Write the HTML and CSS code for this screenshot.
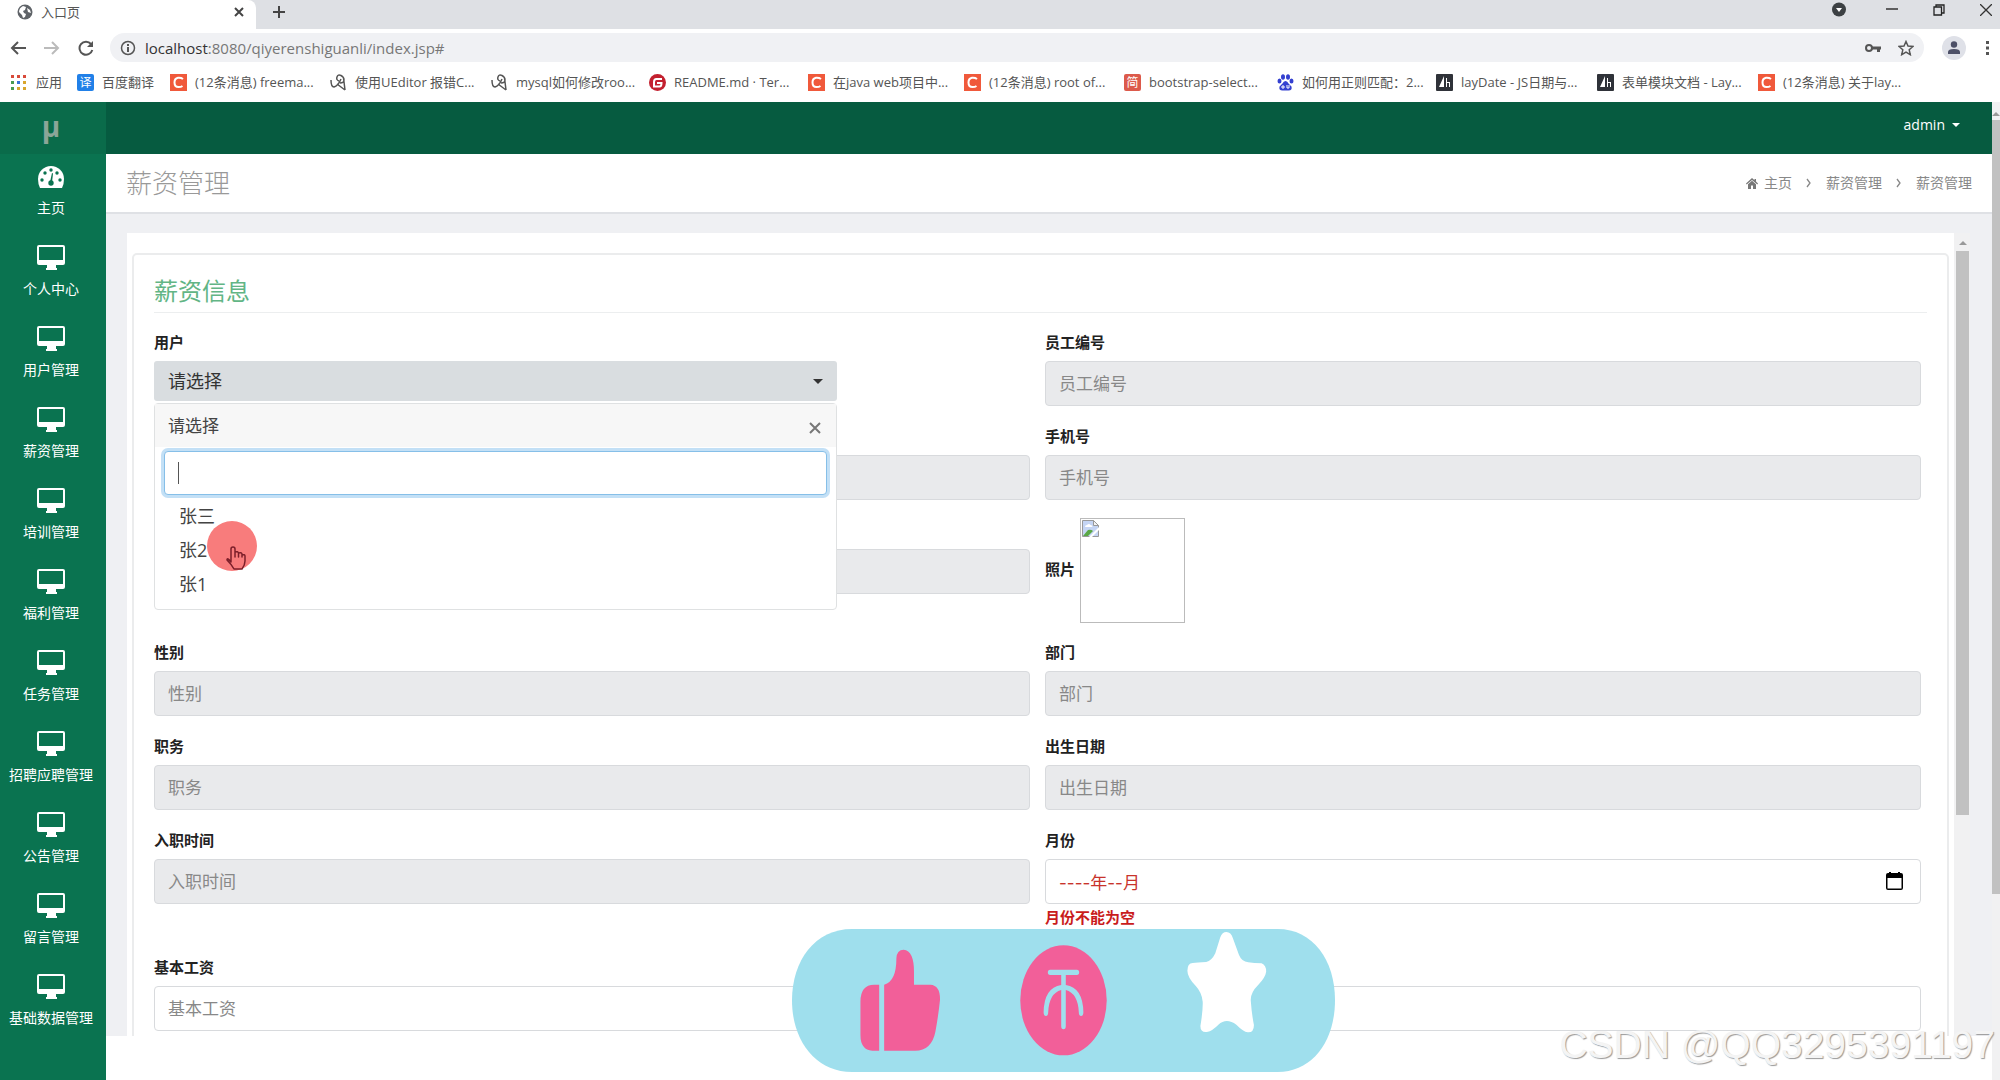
FILE: index.html
```html
<!DOCTYPE html>
<html lang="zh-CN">
<head>
<meta charset="utf-8">
<title>入口页</title>
<link rel="stylesheet" href="styles.css">
</head>
<body>
<svg class="defs" aria-hidden="true">
  <symbol id="monitor" viewBox="0 0 28 25"><path fill-rule="evenodd" d="M2 0h24a2 2 0 0 1 2 2v16a2 2 0 0 1-2 2h-7v3h1v2H9v-2h1v-3H2a2 2 0 0 1-2-2V2a2 2 0 0 1 2-2zm0 2v13h24V2z"/></symbol>
  <symbol id="csdn" viewBox="0 0 17 17"><path fill="#f0593b" d="M0 0h17v17H0z"/><path fill="none" stroke="#fff" stroke-width="2" d="M13 5Q11 3.500 8 3.800Q4.500 4.500 4.500 8.500Q4.500 13 8.500 13Q11 13 12.500 12"/></symbol>
  <symbol id="ueditor" viewBox="0 0 17 17"><path fill="none" stroke="#555" stroke-width="1.500" d="M1 6q0 7 3 7q4-1 7-8M9 7q-3-1-2-4t4-1.500 3 4.500-4 3M13.500 4l1.500 12M7 10l8 6"/></symbol>
  <symbol id="layui" viewBox="0 0 17 17"><rect width="17" height="17" rx="1" fill="#2f3239"/><path fill="#fff" d="M8 2v11H3zM10 4h1v9h-1zM11 8h3v1h-3zM13 9h1v4h-1z"/></symbol>
  <symbol id="crumb" viewBox="0 0 8 10"><path fill="none" stroke="#888" stroke-width="1.300" d="M2 1l3 4-3 4"/></symbol>
</svg>

<header class="browser">
  <div class="tabs">
    <div class="tab">
      <svg width="16" height="16" viewBox="0 0 16 16"><circle cx="8" cy="8" r="7.500" fill="#5f6368"/><path fill="#fff" d="M2 8q0-4 4-6l3 1-1 3-2 1 1 2 2 1-1 3-2 1-1-3zM10 4l3 2 1 3-3-1z"/></svg>
      <span class="tab-title">入口页</span>
      <button class="icon-btn" aria-label="关闭标签页"><svg width="10" height="10" viewBox="0 0 10 10"><path stroke="#444" stroke-width="2" d="M1 1l8 8M9 1L1 9"/></svg></button>
    </div>
    <button class="icon-btn new-tab" aria-label="新标签页"><svg width="12" height="12" viewBox="0 0 12 12"><path stroke="#444" stroke-width="2" d="M6 0v12M0 6h12"/></svg></button>
    <div class="window-buttons">
      <svg width="15" height="15" viewBox="0 0 15 15"><circle cx="7" cy="7.500" r="7" fill="#3c4043"/><path fill="#fff" d="M4 6h6l-3 4z"/></svg>
      <svg width="12" height="12" viewBox="0 0 12 12"><path stroke="#333" stroke-width="1.500" d="M0 5h12"/></svg>
      <svg width="12" height="12" viewBox="0 0 12 12"><path fill="none" stroke="#222" stroke-width="1.300" d="M1 3h7.500v8H1zM3 3V1h8v8H8.500"/></svg>
      <svg width="12" height="12" viewBox="0 0 12 12"><path stroke="#333" stroke-width="1.300" d="M0 0l12 12M12 0L0 12"/></svg>
    </div>
  </div>
  <div class="toolbar">
    <button class="icon-btn" aria-label="后退"><svg width="16" height="14" viewBox="0 0 16 14"><path fill="none" stroke="#555" stroke-width="2" d="M8 1L2 7l6 6M2 7h14"/></svg></button>
    <button class="icon-btn" aria-label="前进"><svg width="16" height="14" viewBox="0 0 16 14"><path fill="none" stroke="#bbb" stroke-width="2" d="M8 1l6 6-6 6M14 7H0"/></svg></button>
    <button class="icon-btn" aria-label="刷新"><svg width="16" height="16" viewBox="0 0 16 16"><path fill="none" stroke="#555" stroke-width="2" d="M13 4a6.500 6.500 0 1 0 1.300 6"/><path fill="#555" d="M15 1v6H9z"/></svg></button>
    <div class="omnibox">
      <svg width="16" height="16" viewBox="0 0 16 16"><circle cx="8" cy="8" r="6.500" fill="none" stroke="#555" stroke-width="1.500"/><path fill="#555" d="M7 7h2v5H7zM7 4h2v2H7z"/></svg>
      <span class="url">localhost<span>:8080/qiyerenshiguanli/index.jsp#</span></span>
      <svg width="16" height="10" viewBox="0 0 16 10"><circle cx="4" cy="5" r="3" fill="none" stroke="#555" stroke-width="2"/><path fill="#555" d="M7 3.500h9v3h-1v2.500h-3V6.500H7z"/></svg>
      <svg width="16" height="16" viewBox="0 0 16 16"><path fill="none" stroke="#555" stroke-width="1.500" d="M8 1.500l2 4.500 5 .5-3.800 3.300 1.100 4.900L8 12.200l-4.300 2.500 1.100-4.900L1 6.500 6 6z"/></svg>
    </div>
    <svg width="24" height="24" viewBox="0 0 24 24"><circle cx="12" cy="12" r="12" fill="#dfe1e8"/><circle cx="12" cy="8.500" r="3.200" fill="#4d5067"/><path fill="#4d5067" d="M6 18v-2q0-3 6-3t6 3v2z"/></svg>
    <svg width="4" height="16" viewBox="0 0 4 16"><path fill="#555" d="M0 1h3v3H0zM0 6.500h3v3H0zM0 12h3v3H0z"/></svg>
  </div>
  <nav class="bookmarks">
    <a href="#"><svg viewBox="0 0 17 17"><path fill="#d84a3a" d="M0 1h3v3H0zM6 1h3v3H6zM12 1h3v3h-3z"/><path fill="#4a9a50" d="M0 7h3v3H0zM0 13h3v3H0z"/><path fill="#3a72d8" d="M6 7h3v3H6z"/><path fill="#d9a62c" d="M12 7h3v3h-3zM6 13h3v3H6zM12 13h3v3h-3z"/></svg>应用</a>
    <a href="#"><span class="badge blue">译</span>百度翻译</a>
    <a href="#"><svg><use href="#csdn"/></svg>(12条消息) freema...</a>
    <a href="#"><svg><use href="#ueditor"/></svg>使用UEditor 报错C...</a>
    <a href="#"><svg><use href="#ueditor"/></svg>mysql如何修改roo...</a>
    <a href="#"><svg viewBox="0 0 17 17"><circle cx="8.500" cy="8.500" r="8.500" fill="#c3202f"/><path fill="none" stroke="#fff" stroke-width="2" d="M13 5H7.500Q5 5 5 8v4.500h5.500q2 0 2-3.500H8"/></svg>README.md · Ter...</a>
    <a href="#"><svg><use href="#csdn"/></svg>在java web项目中...</a>
    <a href="#"><svg><use href="#csdn"/></svg>(12条消息) root of...</a>
    <a href="#"><span class="badge red">简</span>bootstrap-select...</a>
    <a href="#"><svg viewBox="0 0 17 17"><g fill="#3440d0"><ellipse cx="6" cy="3" rx="2" ry="2.800"/><ellipse cx="11" cy="3" rx="2" ry="2.800"/><ellipse cx="2.500" cy="7" rx="2" ry="2.500"/><ellipse cx="14.500" cy="7" rx="2" ry="2.500"/><path d="M8.500 7q2 0 3 2.500l3 3q1 4-3 4h-6q-4 0-3-4l3-3Q6.500 7 8.500 7z"/></g><path stroke="#fff" fill="none" d="M5 12h2v2H5zM10 11v3h2v-3"/></svg>如何用正则匹配：2...</a>
    <a href="#"><svg><use href="#layui"/></svg>layDate - JS日期与...</a>
    <a href="#"><svg><use href="#layui"/></svg>表单模块文档 - Lay...</a>
    <a href="#"><svg><use href="#csdn"/></svg>(12条消息) 关于lay...</a>
  </nav>
</header>

<div class="app">
  <aside class="sidebar">
    <div class="logo">μ</div>
    <nav>
      <a href="#"><svg viewBox="0 0 28 25"><path fill="#fff" d="M3 24Q1 20 1 15a13 13 0 0 1 26 0q0 5-2 9z"/><g fill="#0a7350"><circle cx="5" cy="16" r="1.700"/><circle cx="8" cy="9" r="1.700"/><circle cx="14" cy="6" r="1.700"/><circle cx="20" cy="9" r="1.700"/><circle cx="23" cy="16" r="1.700"/><circle cx="14" cy="19" r="2.700"/><path d="M13 18l2-9 1 .5-1 9z"/></g></svg>主页</a>
      <a href="#"><svg><use href="#monitor"/></svg>个人中心</a>
      <a href="#"><svg><use href="#monitor"/></svg>用户管理</a>
      <a href="#"><svg><use href="#monitor"/></svg>薪资管理</a>
      <a href="#"><svg><use href="#monitor"/></svg>培训管理</a>
      <a href="#"><svg><use href="#monitor"/></svg>福利管理</a>
      <a href="#"><svg><use href="#monitor"/></svg>任务管理</a>
      <a href="#"><svg><use href="#monitor"/></svg>招聘应聘管理</a>
      <a href="#"><svg><use href="#monitor"/></svg>公告管理</a>
      <a href="#"><svg><use href="#monitor"/></svg>留言管理</a>
      <a href="#"><svg><use href="#monitor"/></svg>基础数据管理</a>
    </nav>
  </aside>

  <div class="main">
    <div class="topbar"><button class="user">admin<span class="caret"></span></button></div>
    <div class="page-head">
      <h1>薪资管理</h1>
      <nav class="crumbs">
        <a href="#"><svg width="12" height="11" viewBox="0 0 12 11"><path fill="#777" d="M6 0l2.500 2.200V1H10v2.500L12 5.500l-.7.900L6 1.900.700 6.400 0 5.500z"/><path fill="#777" d="M6 2.800l4 3.500V11H7V7.500H5V11H2V6.300z"/></svg>主页</a>
        <svg width="8" height="10"><use href="#crumb"/></svg>
        <a href="#">薪资管理</a>
        <svg width="8" height="10"><use href="#crumb"/></svg>
        <span>薪资管理</span>
      </nav>
    </div>

    <div class="viewport">
      <div class="frame">
        <section class="card">
          <h2>薪资信息</h2>
          <form class="form">
            <div class="field">
              <label for="user">用户</label>
              <div class="picker">
                <button type="button" id="user" class="picker-toggle">请选择<span class="caret"></span></button>
                <div class="menu">
                  <div class="menu-head">请选择<button type="button" class="icon-btn" aria-label="关闭"><svg width="12" height="12" viewBox="0 0 12 12"><path stroke="#777" stroke-width="2" d="M1 1l10 10M11 1L1 11"/></svg></button></div>
                  <div class="search"><input type="text" aria-label="搜索"><i class="text-caret"></i></div>
                  <ul><li>张三</li><li>张2</li><li>张1</li></ul>
                  <svg class="pointer" width="50" height="50" viewBox="0 0 50 50"><circle cx="25" cy="25" r="25" fill="#f87c7c"/><path fill="none" stroke="#7c1f2a" stroke-width="1.500" stroke-linejoin="round" d="M24 41V28q0-2 2-2t2 2v8-5q3-1 3.500 1v4-4q3-1 3.500 1v3-2q3-1 3 1v5q0 4-3 8h-8q-2-4-7-9 0-3 4 2z"/></svg>
                </div>
              </div>
            </div>
            <div class="field"><label for="no">员工编号</label><input id="no" placeholder="员工编号" readonly></div>
            <div class="field covered"><input aria-label="用户" readonly></div>
            <div class="field"><label for="phone">手机号</label><input id="phone" placeholder="手机号" readonly></div>
            <div class="field covered"><input aria-label="用户" readonly></div>
            <div class="photo-field"><span class="label">照片</span>
              <div class="photo"><svg width="17" height="17" viewBox="0 0 17 17"><path fill="#c5d5f4" stroke="#999" d="M.500.500h11l5 5v11H.500z"/><path fill="#fff" d="M3 7q0-2 2-2 2-2 3.500 0 2 0 2 2z"/><path fill="#5aa845" d="M1 16l5-6q3-1 5 1l-5 5z"/><path fill="#fff" d="M7 17L17 7v3l-7 7z"/><path fill="#f4f4f4" stroke="#999" d="M11.500.500v5h5z"/></svg></div>
            </div>
            <div class="field"><label for="sex">性别</label><input id="sex" placeholder="性别" readonly></div>
            <div class="field"><label for="dept">部门</label><input id="dept" placeholder="部门" readonly></div>
            <div class="field"><label for="job">职务</label><input id="job" placeholder="职务" readonly></div>
            <div class="field"><label for="birth">出生日期</label><input id="birth" placeholder="出生日期" readonly></div>
            <div class="field"><label for="entry">入职时间</label><input id="entry" placeholder="入职时间" readonly></div>
            <div class="field"><label for="month">月份</label>
              <div class="month"><input id="month" class="invalid" value="----年--月"><svg width="17" height="18" viewBox="0 0 17 18"><path fill-rule="evenodd" d="M3 0h2v1h7V0h2v1h1q2 0 2 2v13q0 2-2 2H2q-2 0-2-2V3q0-2 2-2h1zM1.500 6v10.500h14V6z"/></svg></div>
              <p class="error">月份不能为空</p>
            </div>
            <div class="field"><label for="base">基本工资</label><input id="base" placeholder="基本工资"></div>
            <div class="field covered"><input aria-label="基本工资"></div>
          </form>
        </section>
      </div>
      <div class="scroll inner"><i class="up"></i><i class="thumb"></i></div>
    </div>
    <div class="bottom"></div>
  </div>
  <div class="scroll outer"><i class="up"></i><i class="thumb"></i></div>
</div>

<svg class="reactions" viewBox="30 87 1420 429" preserveAspectRatio="none">
  <path fill="#9fdfed" d="M187 87H1300C1392 87 1450 180 1450 301S1392 516 1300 516H187C90 516 30 420 30 301S90 87 187 87z"/>
  <path fill="#f25f99" d="M258 254V452H240Q209 450 209 405V305Q209 254 245 254zM271 254Q303 245 303 175Q304 149 322 149Q349 152 349 215V254H392Q418 256 417 300Q413 345 405 395Q395 452 352 452H271z"/>
  <ellipse cx="740" cy="301" rx="113" ry="165" fill="#f25f99"/>
  <path fill="#9fdfed" d="M705 209h70q6 0 6 8t-6 8h-29v30q45 8 46 82 0 11-6 11t-6-11q-2-57-34-67v108q0 10-6 10t-6-10V270q-32 10-34 67 0 11-6 11t-6-11q1-74 46-82v-30h-29q-6 0-6-8t6-8z"/>
  <path fill="#fff" d="M1166 96Q1178 96 1183 115L1199 165Q1206 185 1223 187Q1238 190 1258 190Q1270 195 1270 215Q1268 232 1249 255Q1227 280 1230 305Q1232 340 1238 375Q1238 398 1222 397Q1210 395 1192 374Q1166 352 1145 374Q1130 392 1115 396Q1098 398 1098 378Q1105 330 1104 305Q1102 278 1086 258Q1064 232 1064 212Q1064 190 1078 189Q1090 187 1113 186Q1128 182 1137 160L1150 112Q1155 96 1166 96z"/>
</svg>
<div class="watermark">CSDN @QQ3295391197</div>
</body>
</html>
```
FILE: styles.css
```css
* { box-sizing: border-box; }
body {
  margin: 0;
  height: 100vh;
  display: flex;
  flex-direction: column;
  overflow: hidden;
  background: #fff;
  color: #444;
  font: 14px/22px "Open Sans", "Noto Sans CJK SC", sans-serif;
}
a { color: inherit; text-decoration: none; }
button, input { font: inherit; color: inherit; }
svg { flex: none; display: block; }
.defs { position: absolute; width: 0; height: 0; }
.icon-btn { display: flex; padding: 0; border: 0; background: none; }

/* browser window */
.browser { flex: none; font-size: 13px; color: #555; }
.tabs { display: flex; height: 29px; background: #dee0e4; }
.tab {
  display: flex; align-items: center; gap: 8px;
  width: 256px; padding: 0 12px 6px 17px;
  background: #fff; border-radius: 0 8px 0 0;
}
.tab-title { flex: 1; }
.new-tab { align-items: center; padding: 0 17px 6px; }
.window-buttons { display: flex; align-items: center; gap: 35px; margin-left: auto; padding: 0 8px 10px 0; }
.window-buttons svg:first-child { margin-right: 4px; }
.toolbar { display: flex; align-items: center; gap: 18px; height: 39px; padding: 0 10px 2px; }
.omnibox {
  flex: 1; display: flex; align-items: center; gap: 17px;
  height: 29px; margin-left: -2px; padding: 0 10px; border-radius: 15px;
  background: #f0f1f4; font-size: 15px;
}
.toolbar > svg:last-child { margin-left: 2px; }
.url { flex: 1; margin-left: -8px; color: #333; }
.url span { color: #777; }
.bookmarks {
  display: grid; align-items: center;
  grid-template-columns: 66px 93px 160px 161px 158px 159px 156px 160px 153px 159px 161px 161px 1fr;
  height: 34px; padding: 0 0 6px 11px; font-size: 13px; white-space: nowrap;
}
.bookmarks a { display: flex; align-items: center; gap: 8px; }
.bookmarks svg { width: 17px; height: 17px; }
.badge { width: 17px; border-radius: 2px; color: #fff; font-size: 12px; line-height: 17px; text-align: center; }
.blue { background: #2180e8; }
.red { background: #dc5a4b; }

/* application shell */
.app { flex: 1; display: flex; min-height: 0; }
.sidebar { flex: none; width: 106px; background: #0a7350; color: #fff; }
.logo {
  height: 52px; padding-right: 4px; background: #0a6b4a; color: #8ba598;
  font-size: 28px; font-weight: 700; line-height: 48px; text-align: center;
}
.sidebar nav { padding-right: 4px; }
.sidebar a { display: flex; flex-direction: column; align-items: center; gap: 8px; height: 81px; padding-top: 10px; white-space: nowrap; }
.sidebar svg { width: 28px; height: 25px; fill: #fff; }
.main { flex: 1; display: flex; flex-direction: column; min-width: 0; }
.topbar { flex: none; height: 52px; padding: 12px 32px; background: #065b40; }
.user { display: flex; align-items: center; gap: 7px; margin-left: auto; padding: 0; border: 0; background: none; color: #fff; }
.caret { border: 4px solid transparent; border-top-color: currentColor; border-bottom: 0; }
.page-head {
  flex: none; display: flex; align-items: center; justify-content: space-between;
  height: 60px; padding: 0 20px; border-bottom: 2px solid #dfe1e5;
}
h1 { margin: 0; color: #999; font-size: 26px; font-weight: 300; line-height: 40px; }
.crumbs { display: flex; align-items: center; gap: 13px; color: #888; }
.crumbs a { display: flex; align-items: center; gap: 6px; }
.viewport { flex: 1; display: flex; min-height: 0; padding: 19px 22px 0 21px; background: #eff0f3; }
.frame { flex: 1; min-width: 0; padding: 22px 7px 0; overflow: hidden; background: #fff; }
.bottom { flex: none; height: 44px; background: #fff; }

/* scrollbars */
.scroll { flex: none; display: flex; flex-direction: column; align-items: center; background: #f1f1f2; }
.up { border: 4px solid transparent; border-top: 0; border-bottom-color: #999; }
.thumb { width: 100%; background: #c1c1c1; }
.inner { width: 16px; padding: 8px 1px 0 2px; gap: 6px; }
.inner .thumb { height: 71%; }
.outer { width: 8px; padding-top: 10px; gap: 4px; }
.outer .thumb { height: 80%; }

/* form */
.card { padding: 18px 20px 40px; border-radius: 3px; background: #fff; box-shadow: 0 0 0 2px #ebeced; }
h2 { margin: 0 0 18px; padding-bottom: 3px; border-bottom: 1px solid #eceeef; color: #62b585; font-size: 24px; font-weight: 400; line-height: 36px; }
.form { display: grid; grid-template-columns: 1fr 1fr; gap: 19px 15px; margin-right: 6px; }
label, .label { display: block; color: #222; font-size: 15px; font-weight: 700; line-height: 22px; }
label { margin-bottom: 8px; }
.field input {
  display: block; width: 100%; height: 45px; padding: 0 13px;
  border: 1px solid #d8dadd; border-radius: 4px; outline: 0; background: #fff; font-size: 17px;
}
.field input[readonly] { background: #e9eaec; }
input::placeholder { color: #888; opacity: 1; }
.covered { padding-top: 30px; }
.photo-field { display: flex; align-items: center; gap: 5px; height: 103px; }
.photo-field .label { padding-bottom: 4px; }
.photo { width: 105px; height: 105px; padding: 1px; border: 1px solid #bbb; }
.month { position: relative; }
.month svg { position: absolute; right: 18px; top: 13px; }
.field .invalid { color: #c8332b; font-family: Inter, "Noto Sans CJK SC", sans-serif; }
.error { margin: 2px 0 9px; color: #c91c1c; font-size: 15px; font-weight: 700; line-height: 22px; }

/* searchable drop-down */
.picker { position: relative; width: 78%; font-size: 17px; }
.picker-toggle {
  display: flex; align-items: center; justify-content: space-between;
  width: 100%; height: 40px; padding: 0 14px; border: 0; border-radius: 3px;
  background: #d9dde0; color: #333; font-size: 18px;
}
.picker-toggle .caret { border-width: 5px 5px 0; }
.menu {
  position: absolute; z-index: 2; top: 42px; left: 0; right: 0; height: 207px;
  border: 1px solid #dfe1e2; border-radius: 4px; background: #fff;
}
.menu-head { display: flex; align-items: center; justify-content: space-between; height: 43px; padding: 0 15px 0 13px; background: #f7f7f7; }
.menu-head .icon-btn { padding-top: 4px; }
.search { position: relative; padding: 4px 9px; }
.search input { height: 44px; border-color: #86bfe8; box-shadow: 0 0 0 3px #c3e0f6; }
.text-caret { position: absolute; left: 23px; top: 15px; width: 1px; height: 22px; background: #555; }
.menu ul { margin: 0; padding: 0 0 0 24px; list-style: none; font-size: 18px; line-height: 34px; }
.pointer { position: absolute; left: 52px; top: 117px; }

/* floating layers */
.reactions { position: absolute; z-index: 3; left: calc(50% - 208px); bottom: 8px; width: 543px; height: 143px; }
.watermark {
  position: absolute; z-index: 4; right: 5px; bottom: 11px;
  color: #f4f4f4; font: 39px/48px "Liberation Sans", sans-serif; text-shadow: 1px 1px 1px #999;
}
```
